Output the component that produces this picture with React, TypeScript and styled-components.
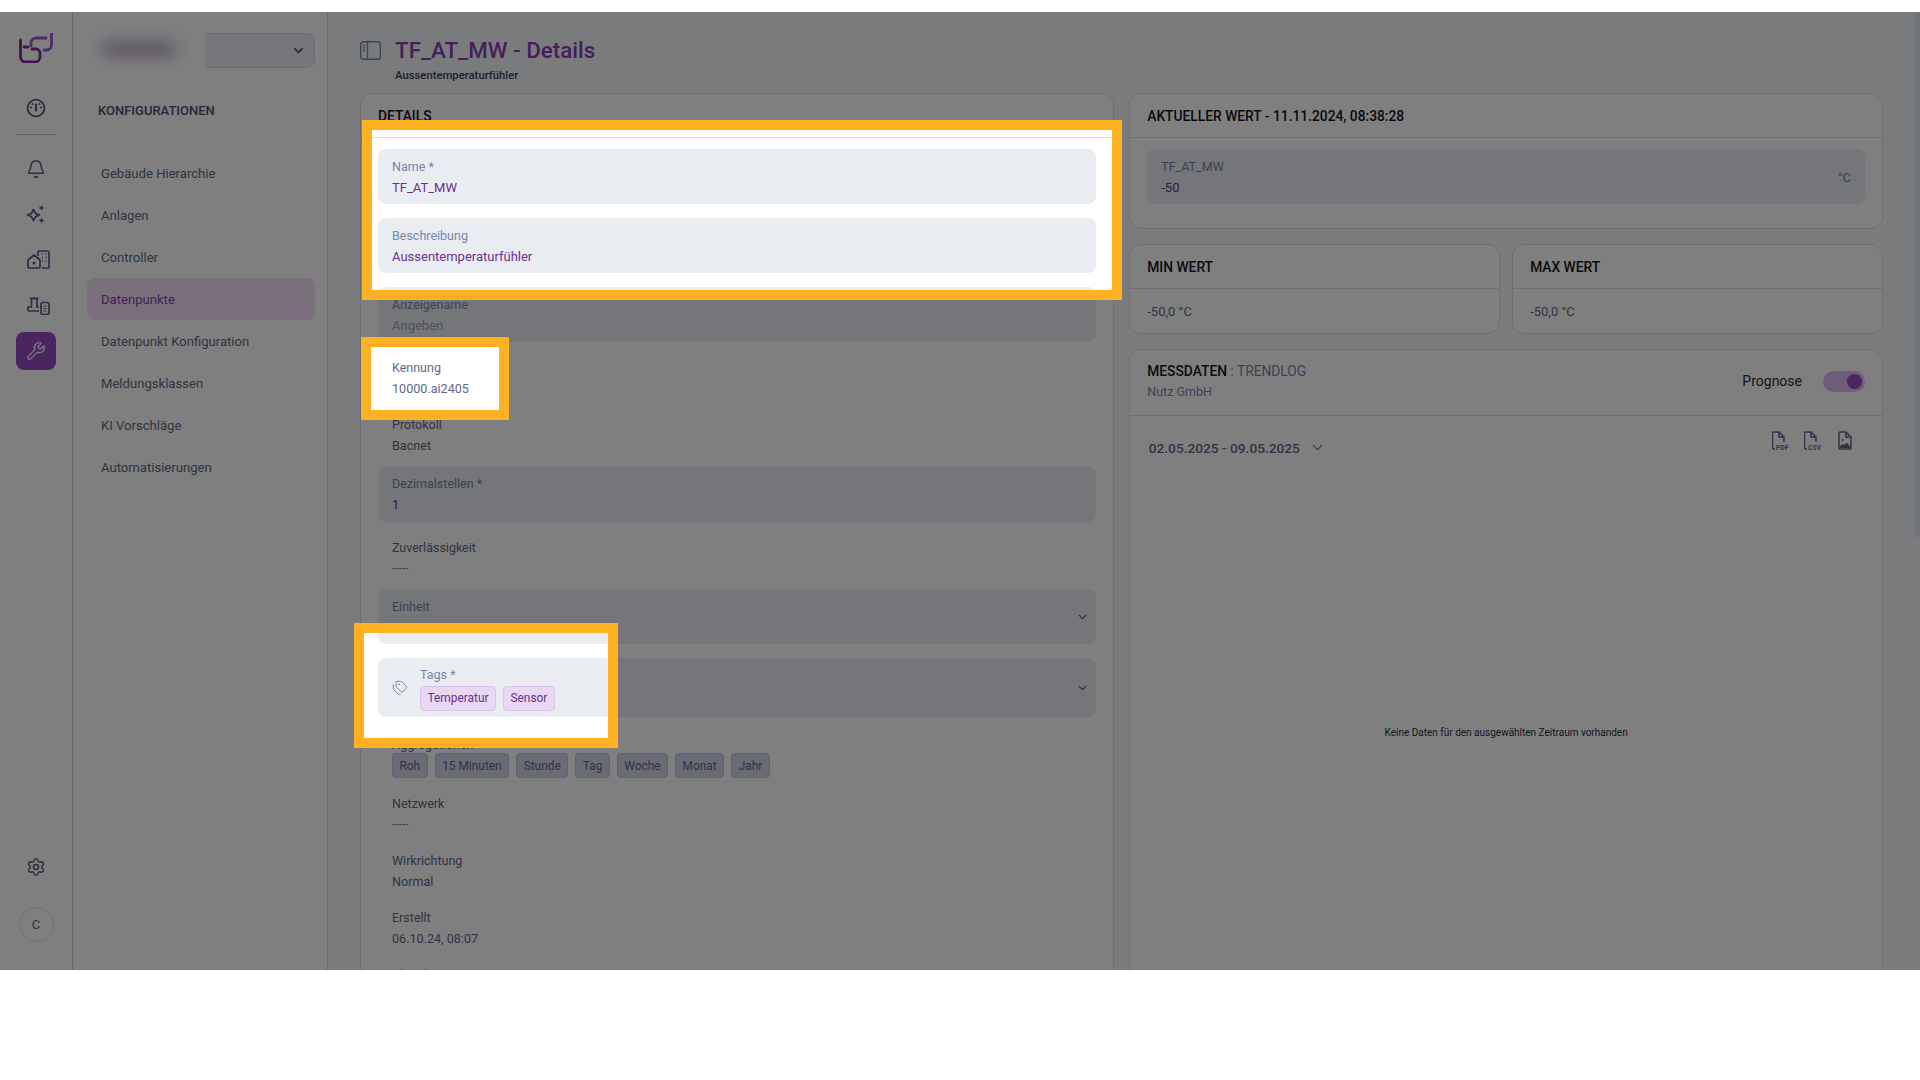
import React from 'react';
import styled, { createGlobalStyle } from 'styled-components';
import { Bell, ChevronDown, Settings, Tags, Wrench } from 'lucide-react';

const INK = '#5f6788';
const PURPLE = '#6d2f8e';
const BRIGHT_PURPLE = '#8a3fb5';
const FIELD = '#e9edf2';
const LINE = '#d9dee8';

const holes = [
  [372, 118, 740, 160],
  [371, 335, 128, 63],
  [364, 621, 244, 105],
];

// page is dimmed except for the rectangles above, so the real fields show through
const holePath =
  'M0 0H1920V958H0Z ' + holes.map(([x, y, w, h]) => `M${x} ${y}h${w}v${h}h${-w}Z`).join(' ');

const GlobalStyle = createGlobalStyle`
  html, body {
    margin: 0;
    background: #fff;
    font-family: Roboto, "Liberation Sans", sans-serif;
    color: ${INK};
  }
  * { box-sizing: border-box; }
`;

const Screen = styled.div`
  position: relative;
  margin-top: 12px;
  height: 958px;
  display: flex;
  overflow: hidden;
  background: #f4f7fb;
`;

const Dim = styled.div`
  position: absolute;
  inset: 0;
  background: rgba(0, 0, 0, 0.5);
  clip-path: path(evenodd, '${holePath}');
`;

const Frame = styled.div<{ $x: number; $y: number; $w: number; $h: number }>`
  position: absolute;
  left: ${(p) => p.$x - 10}px;
  top: ${(p) => p.$y - 10}px;
  width: ${(p) => p.$w + 20}px;
  height: ${(p) => p.$h + 20}px;
  border: 10px solid #ffb023;
`;

const ScrollThumb = styled.div`
  position: absolute;
  top: 0;
  right: 0;
  width: 5px;
  height: 525px;
  background: #dfe6f3;
`;

const Rail = styled.aside`
  width: 73px;
  flex: none;
  display: flex;
  flex-direction: column;
  align-items: center;
  padding: 21px 0 28px;
  background: #fff;
  border-right: 1px solid #c9cee0;
`;

const Logo = styled.svg`
  width: 34px;
  height: 30px;
  margin-bottom: 26px;
`;

const RailButton = styled.div<{ $active?: boolean }>`
  width: 40px;
  height: 38px;
  display: flex;
  align-items: center;
  justify-content: center;
  border-radius: 8px;
  color: ${(p) => (p.$active ? '#f3e4fb' : '#565e86')};
  background: ${(p) => (p.$active ? '#964bc0' : 'transparent')};
`;

const BellGlyph = styled(Bell)`
  margin-top: 3px;
`;

const SparkleGlyph = styled.svg`
  width: 20px;
  height: 20px;
  margin-top: 2px;
`;

const SideGlyph = styled.svg`
  width: 23px;
  height: 19px;
  margin-left: 4px;
`;

const RailGroup = styled.div`
  display: flex;
  flex-direction: column;
  gap: 8px;
`;

const RailDivider = styled.div`
  width: 40px;
  height: 1px;
  margin: 7px 0 13px;
  background: #c9cee0;
`;

const RailBottom = styled.div`
  margin-top: auto;
  display: flex;
  flex-direction: column;
  align-items: center;
  gap: 21px;
`;

const Avatar = styled.div`
  width: 35px;
  height: 35px;
  display: flex;
  align-items: center;
  justify-content: center;
  border-radius: 50%;
  border: 1px solid #e3e5ea;
  font-size: 13px;
  color: #5f6788;
`;

const SideNav = styled.nav`
  position: relative;
  width: 255px;
  flex: none;
  padding: 21px 12px 0 14px;
  background: #fff;
  border-right: 1px solid #d3d7e2;
`;

const PlantSelect = styled.div`
  height: 35px;
  display: flex;
  align-items: center;
  justify-content: flex-end;
  padding-right: 8px;
  background: #eaedf3;
  border: 1px solid #d9dee8;
  border-radius: 8px;
  color: #4d5470;
`;

const BlurPatch = styled.div`
  position: absolute;
  left: 9px;
  top: 13px;
  width: 123px;
  height: 50px;
  background: #fff;
`;

const BlurBlob = styled.div`
  position: absolute;
  left: 21px;
  top: 17px;
  width: 72px;
  height: 14px;
  background: #b3a2c4;
  filter: blur(8px);
`;

const SideTitle = styled.h2`
  margin: 33px 0 0 11px;
  font-size: 13px;
  line-height: 20px;
  font-weight: 500;
  color: #4a5070;
`;

const SideList = styled.ul`
  margin: 31px 0 0;
  padding: 0;
  list-style: none;
`;

const SideItem = styled.li<{ $active?: boolean }>`
  height: 42px;
  display: flex;
  align-items: center;
  padding-left: 14px;
  border-radius: 8px;
  font-size: 13.1px;
  color: ${(p) => (p.$active ? BRIGHT_PURPLE : INK)};
  background: ${(p) => (p.$active ? '#f3e1f8' : 'transparent')};
`;

const Main = styled.main`
  flex: 1;
  min-width: 0;
  padding: 25px 37px 0 32px;
`;

const PageHead = styled.header`
  display: flex;
  height: 56px;
  gap: 14px;
`;

const PanelIcon = styled.svg`
  width: 21px;
  height: 19px;
  margin-top: 4px;
  flex: none;
  color: #7f89a8;
`;

const PageTitle = styled.h1`
  margin: 0;
  font-size: 22.4px;
  line-height: 26px;
  font-weight: 500;
  color: ${BRIGHT_PURPLE};
`;

const PageSubtitle = styled.div`
  margin-top: 5.5px;
  font-size: 11.3px;
  line-height: 14px;
  font-weight: 500;
  color: #3b3f55;
`;

const Columns = styled.div`
  display: grid;
  grid-template-columns: 1fr 1fr;
  gap: 15.5px;
  align-items: start;
`;

const RightColumn = styled.div`
  display: flex;
  flex-direction: column;
  gap: 15px;
`;

const Pair = styled.div`
  display: grid;
  grid-template-columns: 1fr 1fr;
  gap: 12px;
`;

const Card = styled.section`
  background: #fff;
  border: 1px solid ${LINE};
  border-radius: 12px;
`;

const CardHead = styled.div`
  height: 44px;
  display: flex;
  align-items: center;
  padding: 0 17px;
  border-bottom: 1px solid ${LINE};
`;

const CardTitle = styled.h3`
  margin: 0;
  font-size: 13.8px;
  font-weight: 500;
  color: #14151c;
`;

const FormBody = styled.div`
  display: flex;
  flex-direction: column;
  gap: 14px;
  padding: 11px 17px 0;
`;

const Field = styled.div<{ $h?: number }>`
  position: relative;
  height: ${(p) => p.$h ?? 55}px;
  display: flex;
  flex-direction: column;
  gap: 6.5px;
  padding: 9.5px 14px 0;
  border-radius: 8px;
  background: ${FIELD};
`;

const Label = styled.div`
  font-size: 12.5px;
  line-height: 15px;
  color: #7884aa;
`;

const Value = styled.div<{ $muted?: boolean }>`
  font-size: 13px;
  line-height: 16px;
  color: ${(p) => (p.$muted ? '#9aa3bd' : PURPLE)};
`;

const FieldChevron = styled.span`
  position: absolute;
  right: 7px;
  top: 50%;
  transform: translateY(-50%);
  display: flex;
  color: #4d5470;
`;

const Readout = styled.div`
  height: 39px;
  padding: 4px 14px 0;
  & + & {
    margin-top: 4px;
  }
`;

const ReadLabel = styled.div`
  font-size: 12.5px;
  line-height: 16px;
  color: ${INK};
`;

const ReadValue = styled.div`
  margin-top: 5px;
  font-size: 12.6px;
  line-height: 16px;
  color: ${INK};
`;

const EmptyValue = styled(ReadValue)`
  font-size: 10.5px;
  letter-spacing: 0.5px;
`;

const TagField = styled.div`
  position: relative;
  height: 59px;
  display: flex;
  align-items: center;
  gap: 12px;
  padding: 0 14px;
  border-radius: 8px;
  background: ${FIELD};
  color: #7884aa;
`;

const TagStack = styled.div`
  display: flex;
  flex-direction: column;
  gap: 4px;
  padding-top: 2px;
`;

const ChipRow = styled.div`
  display: flex;
  gap: 7px;
`;

const Chip = styled.span<{ $tone?: 'purple' | 'grey' }>`
  height: 25px;
  display: inline-flex;
  align-items: center;
  padding: 0 6.5px;
  border-radius: 4px;
  font-size: 11.9px;
  border: 1px solid ${(p) => (p.$tone === 'grey' ? '#bfc5d8' : '#dcc3ef')};
  background: ${(p) => (p.$tone === 'grey' ? '#d3d9e8' : '#e8d8f4')};
  color: ${(p) => (p.$tone === 'grey' ? '#5f6788' : PURPLE)};
`;

const ChipBlock = styled.div`
  padding: 6px 14px 0;
`;

const ChipLabel = styled(ReadLabel)`
  height: 16px;
`;

const CurrentBody = styled.div`
  padding: 11px 17px 24px;
`;

const UnitSuffix = styled.span`
  position: absolute;
  right: 14px;
  top: 50%;
  transform: translateY(-50%);
  font-size: 13px;
  color: #7884aa;
`;

const StatValue = styled.div`
  height: 44px;
  display: flex;
  align-items: center;
  padding: 0 17px;
  font-size: 13px;
  color: ${INK};
`;

const TrendHead = styled.div`
  height: 66px;
  display: flex;
  align-items: center;
  justify-content: space-between;
  padding: 0 17px 3px;
  border-bottom: 1px solid ${LINE};
`;

const TrendName = styled.span`
  font-weight: 400;
  color: #7884aa;
`;

const TrendOwner = styled.div`
  margin-top: 5px;
  font-size: 12.5px;
  color: #7884aa;
`;

const ForecastToggle = styled.div`
  display: flex;
  align-items: center;
  gap: 21px;
  font-size: 14px;
  color: #2a2c3a;
`;

const Switch = styled.div`
  position: relative;
  width: 42px;
  height: 21px;
  border-radius: 11px;
  background: #dfb6f5;
`;

const SwitchKnob = styled.span`
  position: absolute;
  right: 3px;
  top: 3px;
  width: 15px;
  height: 15px;
  border-radius: 50%;
  background: #964bc0;
`;

const TrendBody = styled.div`
  position: relative;
  height: 700px;
`;

const RangeBar = styled.div`
  display: flex;
  align-items: flex-start;
  justify-content: space-between;
  padding: 15px 28px 0 18.5px;
`;

const RangeLabel = styled.div`
  display: flex;
  align-items: center;
  gap: 9px;
  margin-top: 8px;
  font-size: 13.7px;
  font-weight: 500;
  color: #5f6788;
`;

const Exports = styled.div`
  display: flex;
  gap: 14px;
  color: #5f6788;
`;

const ExportIcon = styled.svg`
  width: 18px;
  height: 19px;
`;

const ExportCaption = styled.text`
  font-family: Roboto, "Liberation Sans", sans-serif;
  font-size: 6.5px;
  font-weight: 700;
  letter-spacing: 0.3px;
  fill: currentColor;
`;

const EmptyNote = styled.div`
  position: absolute;
  left: 0;
  right: 0;
  top: 309px;
  text-align: center;
  font-size: 10px;
  line-height: 16px;
  color: #2a2c3a;
`;

const sideItems = [
  'Gebäude Hierarchie',
  'Anlagen',
  'Controller',
  'Datenpunkte',
  'Datenpunkt Konfiguration',
  'Meldungsklassen',
  'KI Vorschläge',
  'Automatisierungen',
];

const aggregations = ['Roh', '15 Minuten', 'Stunde', 'Tag', 'Woche', 'Monat', 'Jahr'];

const BrandMark = () => (
  <Logo viewBox="0 0 34 30" fill="none" strokeWidth="2.8" strokeLinecap="round">
    <path d="M1.500 7V24a5 5 0 0 0 5 5H16a5 5 0 0 0 5-5V20a4 4 0 0 0-4-4H13" stroke="#7a2f8e" />
    <path d="M32.500 1V12a5 5 0 0 1-5 5H25" stroke="#a453d6" />
    <path d="M27 5H17a5 5 0 0 0-5 5v3" stroke="#a453d6" />
    <path d="M5 14H9" stroke="#7a2f8e" />
  </Logo>
);

const GaugeIcon = () => (
  <svg width="20" height="20" viewBox="0 0 20 20" fill="none" stroke="currentColor" strokeWidth="1.8" strokeLinecap="round">
    <circle cx="10" cy="10" r="8.400" />
    <path d="M10 6.500V12.500" strokeWidth="2.200" />
    <path d="M5 9.500h.1M6.500 6h.1M13.500 6h.1M15 9.500h.1" strokeWidth="2" />
  </svg>
);

const SparkleIcon = () => (
  <SparkleGlyph viewBox="0 0 20 20" fill="none" stroke="currentColor" strokeWidth="1.7" strokeLinejoin="round">
    <path d="M7.500 5.500 9.600 9.400 13.500 11 9.600 12.600 7.500 16.500 5.400 12.600 1.500 11 5.400 9.400Z" />
    <path d="M15.500 1 16.400 3.100 18.500 4 16.400 4.900 15.500 7 14.600 4.900 12.500 4 14.600 3.100Z" fill="currentColor" stroke="none" />
    <path d="M15.500 13.500 16.400 15.600 18.500 16.500 16.400 17.400 15.500 19.500 14.600 17.400 12.500 16.500 14.600 15.600Z" fill="currentColor" stroke="none" />
  </SparkleGlyph>
);

const BuildingsIcon = () => (
  <SideGlyph viewBox="0 0 23 19" fill="none" stroke="currentColor" strokeWidth="1.7" strokeLinejoin="round">
    <path d="M1 10 7 5l6 5v7a1 1 0 0 1-1 1H2a1 1 0 0 1-1-1Z" />
    <circle cx="7" cy="13" r="1.500" fill="currentColor" stroke="none" />
    <path d="M11 6V2a1 1 0 0 1 1-1h9a1 1 0 0 1 1 1v15a1 1 0 0 1-1 1h-6" />
    <path d="M15 4h1M18.500 4h1M15 7.500h1M18.500 7.500h1M15 11h1M18.500 11h1" strokeWidth="1.700" />
  </SideGlyph>
);

const PlantIcon = () => (
  <SideGlyph viewBox="0 0 23 19" fill="none" stroke="currentColor" strokeWidth="1.7" strokeLinejoin="round">
    <path d="M1 15V11H4.500V2.500H10V11H12M1 15H12" />
    <path d="M3 2.500H11.500" />
    <rect x="14" y="6.500" width="8" height="12" rx="2" />
    <path d="M16.500 10h3M16.500 12.500h3M16.500 15h3" strokeWidth="1.200" />
  </SideGlyph>
);

const FileExport = ({ caption }: { caption: string }) => (
  <ExportIcon viewBox="0 0 18 19" fill="none" stroke="currentColor" strokeWidth="1.500" strokeLinejoin="round">
    <path d="M3 18H1.500a1 1 0 0 1-1-1V2a1 1 0 0 1 1-1H7l5 5V11" />
    <path d="M7 1v5h5" />
    <ExportCaption x="4" y="18.500" stroke="none">
      {caption}
    </ExportCaption>
  </ExportIcon>
);

const ImageExport = () => (
  <ExportIcon viewBox="0 0 18 19" fill="none" stroke="currentColor" strokeWidth="1.500" strokeLinejoin="round">
    <path d="M3 2a1 1 0 0 1 1-1h6l5 5v11a1 1 0 0 1-1 1H4a1 1 0 0 1-1-1Z" />
    <path d="M10 1v5h5" />
    <circle cx="6.500" cy="9" r="1" fill="currentColor" stroke="none" />
    <path d="M4 17V15l3-2 1.500 1 2-2.500L14 15V17Z" fill="currentColor" stroke="none" />
  </ExportIcon>
);

const App: React.FC = () => {
  return (
    <>
      <GlobalStyle />
      <Screen>
        <Rail>
          <BrandMark />
          <RailButton>
            <GaugeIcon />
          </RailButton>
          <RailDivider />
          <RailGroup>
            <RailButton>
              <BellGlyph size={20} strokeWidth={1.8} />
            </RailButton>
            <RailButton>
              <SparkleIcon />
            </RailButton>
            <RailButton>
              <BuildingsIcon />
            </RailButton>
            <RailButton>
              <PlantIcon />
            </RailButton>
            <RailButton $active>
              <Wrench size={20} strokeWidth={1.7} />
            </RailButton>
          </RailGroup>
          <RailBottom>
            <RailButton>
              <Settings size={20} strokeWidth={1.8} />
            </RailButton>
            <Avatar>C</Avatar>
          </RailBottom>
        </Rail>

        <SideNav>
          <PlantSelect>
            <ChevronDown size={15} strokeWidth={2.4} />
          </PlantSelect>
          <BlurPatch>
            <BlurBlob />
          </BlurPatch>
          <SideTitle>KONFIGURATIONEN</SideTitle>
          <SideList>
            {sideItems.map((item) => (
              <SideItem key={item} $active={item === 'Datenpunkte'}>
                {item}
              </SideItem>
            ))}
          </SideList>
        </SideNav>

        <Main>
          <PageHead>
            <PanelIcon viewBox="0 0 21 19" fill="none" stroke="currentColor" strokeWidth="1.400">
              <rect x="0.700" y="0.700" width="19.600" height="17.600" rx="2.500" />
              <path d="M7.500 1v17" />
              <path d="M3 4.500h2M3 7h2M3 9.500h2" />
            </PanelIcon>
            <div>
              <PageTitle>TF_AT_MW - Details</PageTitle>
              <PageSubtitle>Aussentemperaturfühler</PageSubtitle>
            </div>
          </PageHead>

          <Columns>
            <Card>
              <CardHead>
                <CardTitle>DETAILS</CardTitle>
              </CardHead>
              <FormBody>
                <Field>
                  <Label>Name *</Label>
                  <Value>TF_AT_MW</Value>
                </Field>
                <Field>
                  <Label>Beschreibung</Label>
                  <Value>Aussentemperaturfühler</Value>
                </Field>
                <Field>
                  <Label>Anzeigename</Label>
                  <Value $muted>Angeben</Value>
                </Field>
                <Readout>
                  <ReadLabel>Kennung</ReadLabel>
                  <ReadValue>10000.ai2405</ReadValue>
                </Readout>
                <Readout>
                  <ReadLabel>Protokoll</ReadLabel>
                  <ReadValue>Bacnet</ReadValue>
                </Readout>
                <Field $h={56}>
                  <Label>Dezimalstellen *</Label>
                  <Value>1</Value>
                </Field>
                <Readout>
                  <ReadLabel>Zuverlässigkeit</ReadLabel>
                  <EmptyValue>-----</EmptyValue>
                </Readout>
                <Field>
                  <Label>Einheit</Label>
                  <Value>°C</Value>
                  <FieldChevron>
                    <ChevronDown size={13} strokeWidth={2.2} />
                  </FieldChevron>
                </Field>
                <TagField>
                  <Tags size={16} strokeWidth={1.5} />
                  <TagStack>
                    <Label>Tags *</Label>
                    <ChipRow>
                      <Chip>Temperatur</Chip>
                      <Chip>Sensor</Chip>
                    </ChipRow>
                  </TagStack>
                  <FieldChevron>
                    <ChevronDown size={13} strokeWidth={2.2} />
                  </FieldChevron>
                </TagField>
                <ChipBlock>
                  <ChipLabel>Aggregationen *</ChipLabel>
                  <ChipRow>
                    {aggregations.map((item) => (
                      <Chip key={item} $tone="grey">
                        {item}
                      </Chip>
                    ))}
                  </ChipRow>
                </ChipBlock>
                <Readout>
                  <ReadLabel>Netzwerk</ReadLabel>
                  <EmptyValue>-----</EmptyValue>
                </Readout>
                <Readout>
                  <ReadLabel>Wirkrichtung</ReadLabel>
                  <ReadValue>Normal</ReadValue>
                </Readout>
                <Readout>
                  <ReadLabel>Erstellt</ReadLabel>
                  <ReadValue>06.10.24, 08:07</ReadValue>
                </Readout>
                <Readout>
                  <ReadLabel>Aktualisiert</ReadLabel>
                </Readout>
              </FormBody>
            </Card>

            <RightColumn>
              <Card>
                <CardHead>
                  <CardTitle>AKTUELLER WERT - 11.11.2024, 08:38:28</CardTitle>
                </CardHead>
                <CurrentBody>
                  <Field>
                    <Label>TF_AT_MW</Label>
                    <Value>-50</Value>
                    <UnitSuffix>°C</UnitSuffix>
                  </Field>
                </CurrentBody>
              </Card>
              <Pair>
                <Card>
                  <CardHead>
                    <CardTitle>MIN WERT</CardTitle>
                  </CardHead>
                  <StatValue>-50,0 °C</StatValue>
                </Card>
                <Card>
                  <CardHead>
                    <CardTitle>MAX WERT</CardTitle>
                  </CardHead>
                  <StatValue>-50,0 °C</StatValue>
                </Card>
              </Pair>
              <Card>
                <TrendHead>
                  <div>
                    <CardTitle>
                      MESSDATEN <TrendName>: TRENDLOG</TrendName>
                    </CardTitle>
                    <TrendOwner>Nutz GmbH</TrendOwner>
                  </div>
                  <ForecastToggle>
                    Prognose
                    <Switch>
                      <SwitchKnob />
                    </Switch>
                  </ForecastToggle>
                </TrendHead>
                <TrendBody>
                  <RangeBar>
                    <RangeLabel>
                      02.05.2025 - 09.05.2025
                      <ChevronDown size={17} strokeWidth={1.5} />
                    </RangeLabel>
                    <Exports>
                      <FileExport caption="PDF" />
                      <FileExport caption="CSV" />
                      <ImageExport />
                    </Exports>
                  </RangeBar>
                  <EmptyNote>Keine Daten für den ausgewählten Zeitraum vorhanden</EmptyNote>
                </TrendBody>
              </Card>
            </RightColumn>
          </Columns>
        </Main>

        <ScrollThumb />
        <Dim />
        {holes.map(([x, y, w, h]) => (
          <Frame key={x} $x={x} $y={y} $w={w} $h={h} />
        ))}
      </Screen>
    </>
  );
};

export default App;
